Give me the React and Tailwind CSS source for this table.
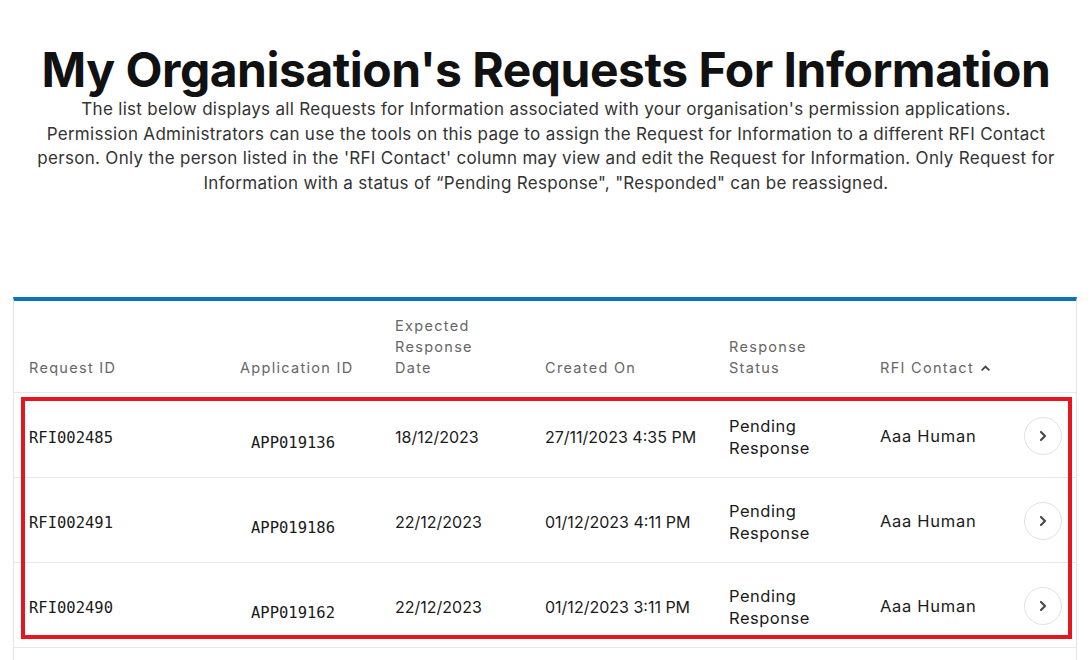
import React from "react";

const rows = [
  { id: "RFI002485", app: "APP019136", expected: "18/12/2023", created: "27/11/2023 4:35 PM", contact: "Aaa Human" },
  { id: "RFI002491", app: "APP019186", expected: "22/12/2023", created: "01/12/2023 4:11 PM", contact: "Aaa Human" },
  { id: "RFI002490", app: "APP019162", expected: "22/12/2023", created: "01/12/2023 3:11 PM", contact: "Aaa Human" },
];

const cols = "grid grid-cols-[211px_155px_150px_184px_151px_145px_1fr]";

const Chevron = () => (
  <svg width="10" height="12" viewBox="0 0 10 12" fill="none">
    <path d="M3 2l4 4-4 4" stroke="#4a4a4a" strokeWidth="2.2" strokeLinecap="round" strokeLinejoin="round" />
  </svg>
);

const App = () => {
  return (
    <div className="min-h-screen bg-white font-['Inter',sans-serif] text-[#111]">
      {/* heading */}
      <section className="pt-[40px] text-center">
        <h1 className="text-[48px] leading-[60px] font-bold tracking-[-0.5px] text-[#111]">
          My Organisation's Requests For Information
        </h1>
        <p className="mt-[-3px] text-[17px] leading-[24.5px] tracking-[0.3px] text-[#333]">
          The list below displays all Requests for Information associated with your organisation's permission applications.
          <br />
          Permission Administrators can use the tools on this page to assign the Request for Information to a different RFI Contact
          <br />
          person. Only the person listed in the 'RFI Contact' column may view and edit the Request for Information. Only Request for
          <br />
          Information with a status of “Pending Response", "Responded" can be reassigned.
        </p>
      </section>

      {/* table */}
      <section className="relative mx-[13px] mt-[102px] w-[1064px] border-x border-[#e4e4e4] border-t-4 border-t-[#0b74b8]">
        <div className={`${cols} h-[92px] items-end border-b border-[#e8e8e8] pb-[14px] text-[14.5px] leading-[21px] tracking-[1.3px] text-[#666]`}>
          <div className="pl-[15px]">Request ID</div>
          <div className="pl-[15px]">Application ID</div>
          <div className="pl-[15px]">Expected<br />Response<br />Date</div>
          <div className="pl-[15px]">Created On</div>
          <div className="pl-[15px]">Response<br />Status</div>
          <div className="flex items-center gap-[7px] pl-[15px]">
            RFI Contact
            <svg width="9" height="6" viewBox="0 0 9 6" fill="none">
              <path d="M1.2 4.8L4.5 1.5l3.3 3.3" stroke="#444" strokeWidth="1.8" strokeLinecap="round" />
            </svg>
          </div>
          <div />
        </div>

        {rows.map((r) => (
          <div key={r.id} className={`${cols} h-[85px] items-center border-b border-[#e8e8e8] pt-[3px] text-[16px] text-[#1a1a1a]`}>
            <div className="mt-[4px] pl-[15px] font-['DejaVu_Sans_Mono',monospace] text-[15.5px]">{r.id}</div>
            <div className="mt-[14px] pl-[26px] font-['DejaVu_Sans_Mono',monospace] text-[15.5px]">{r.app}</div>
            <div className="pl-[15px]">{r.expected}</div>
            <div className="pl-[15px]">{r.created}</div>
            <div className="pl-[15px] text-[16.5px] leading-[22px] tracking-[0.5px]">Pending<br />Response</div>
            <div className="pl-[15px] text-[16.5px] tracking-[0.7px]">{r.contact}</div>
            <div className="mt-[-2px] pl-[14px]">
              <button className="flex h-[38px] w-[38px] items-center justify-center rounded-full border border-[#e2e2e2] bg-white">
                <Chevron />
              </button>
            </div>
          </div>
        ))}
        <div className="h-[20px]" />

        {/* annotation box */}
        <div className="pointer-events-none absolute left-[7px] top-[96px] h-[242px] w-[1051px] border-4 border-[#e5161f]" />
      </section>
    </div>
  );
};

export default App;
